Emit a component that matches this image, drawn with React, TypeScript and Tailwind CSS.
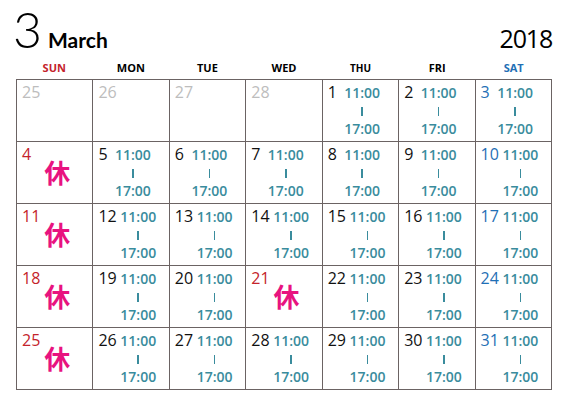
import React from 'react'

type Day = { n: number; kind: 'prev' | 'sun' | 'sat' | 'wd'; off?: boolean }

const days = ['SUN', 'MON', 'TUE', 'WED', 'THU', 'FRI', 'SAT']

const cells: Day[] = [
	{ n: 25, kind: 'prev' }, { n: 26, kind: 'prev' }, { n: 27, kind: 'prev' }, { n: 28, kind: 'prev' },
	...Array.from({ length: 31 }, (_, i) => {
		const n = i + 1
		const dow = (n + 3) % 7
		const kind: Day['kind'] = dow === 0 ? 'sun' : dow === 6 ? 'sat' : 'wd'
		return { n, kind, off: dow === 0 || n === 21 }
	}),
]

const numColor = {
	prev: 'text-[#bdbdbd]',
	sun: 'text-[#c4232b]',
	sat: 'text-[#1f6fb5]',
	wd: 'text-[#111111]',
}

function Cell({ d }: { d: Day }) {
	const color = d.off ? 'text-[#c4232b]' : numColor[d.kind]
	return (
		<div className="bg-white h-[61px] pl-[5px] pt-[2px]">
			{d.off ? (
				<div className="flex flex-col">
					<span className={`text-[16px] leading-[20px] ${color}`}>{d.n}</span>
					<span className="mt-[-5px] self-center text-[26px] leading-[26px] font-bold text-[#e8137f] [font-family:'Noto_Sans_CJK_JP',sans-serif]">休</span>
				</div>
			) : (
				<div className="flex items-baseline gap-[2px]">
					<span className={`min-w-[13px] text-[16px] leading-[20px] ${color}`}>{d.n}</span>
					{d.kind !== 'prev' && (
						<div className="w-[39px] flex flex-col items-center text-[14px] leading-[18px] font-semibold text-[#3a8c9d]">
							<span>11:00</span>
							<span className="block w-[1.5px] h-[9px] my-[4.5px] bg-[#3a8c9d]" />
							<span>17:00</span>
						</div>
					)}
				</div>
			)}
		</div>
	)
}

export default function App() {
	return (
		<div className="w-[564px] h-[404px] bg-white overflow-hidden [font-family:'Open_Sans',sans-serif]">
			<div className="flex items-baseline pl-[13px] pr-[12px] h-[57px]">
				<span className="text-[50px] leading-[58px] font-light text-black [font-family:Lato,sans-serif]">3</span>
				<span className="ml-[6px] text-[21px] font-bold text-black [font-family:Lato,sans-serif]">March</span>
				<span className="ml-auto text-[25px] tracking-[-1.2px] text-black">2018</span>
			</div>

			<div className="ml-[16px] w-[536px] grid grid-cols-7 h-[22px] items-center">
				{days.map(d => (
					<div
						key={d}
						className={`text-center font-bold ${d === 'THU' ? 'text-[10px]' : 'text-[11px]'} ${d === 'SUN' ? 'text-[#c4232b]' : d === 'SAT' ? 'text-[#1f6fb5]' : 'text-black'}`}
					>
						{d}
					</div>
				))}
			</div>

			<div className="ml-[16px] w-[536px] grid grid-cols-7 gap-px p-px bg-[#6b6363]">
				{cells.map(d => (
					<Cell key={`${d.kind}-${d.n}`} d={d} />
				))}
			</div>
		</div>
	)
}
